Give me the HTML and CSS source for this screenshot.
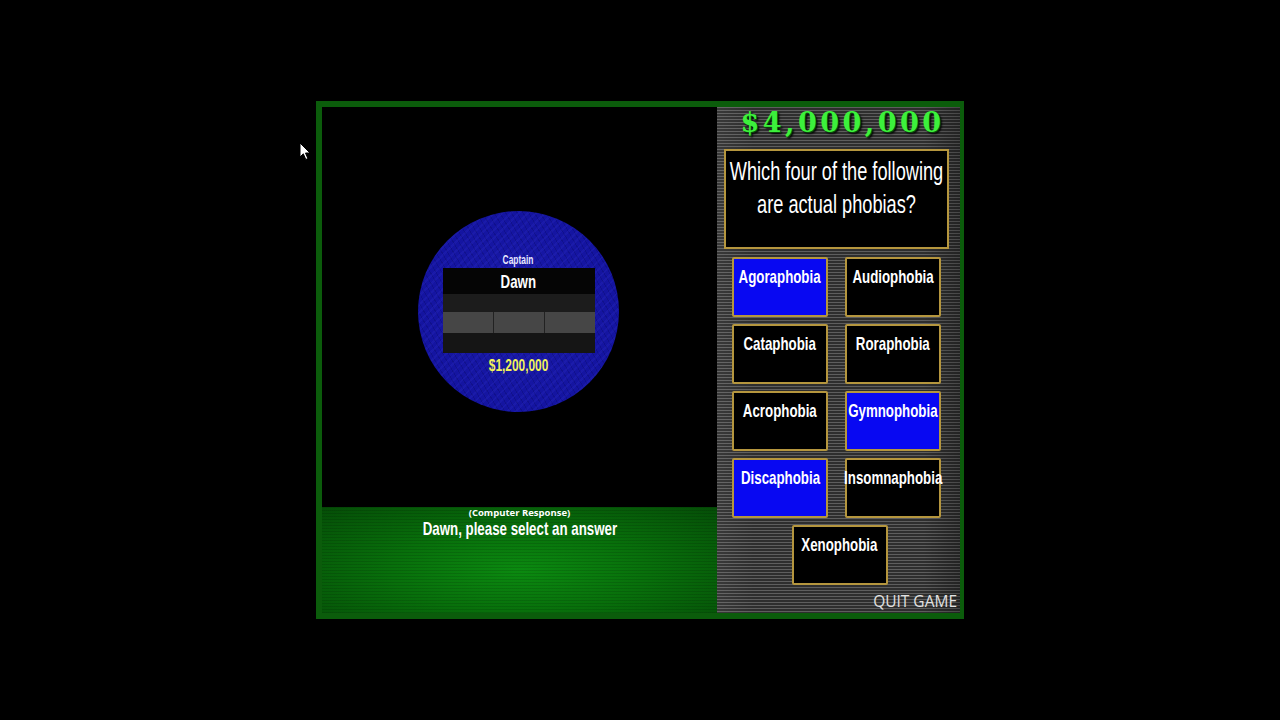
FILE: index.html
```html
<!DOCTYPE html>
<html lang="en">
<head>
    <meta charset="UTF-8">
    <meta name="viewport" content="width=device-width, initial-scale=1.0">
    <title>Phobia Round</title>
    <link rel="stylesheet" href="styles.css">
</head>
<body>
    <svg class="pointer" width="12" height="19" viewBox="0 0 12 19">
        <path d="M1 1 L1 15 L4.3 11.8 L6.8 17.5 L8.9 16.6 L6.5 11 L11 11 Z" fill="#fff" stroke="#000" stroke-width="1"/>
    </svg>
    <div class="frame">
        <div class="stage">
            <div class="arena">
                <div class="disc">
                    <div class="role"><span class="sq">Captain</span></div>
                    <div class="plate">
                        <div class="plate-name"><span class="sq">Dawn</span></div>
                        <div class="plate-blank"></div>
                        <div class="plate-cells"><span></span><span></span><span></span></div>
                        <div class="plate-blank low"></div>
                    </div>
                    <div class="bank"><span class="sq">$1,200,000</span></div>
                </div>
            </div>
            <div class="response">
                <div class="response-label">(Computer Response)</div>
                <div class="response-text"><span class="sq">Dawn, please select an answer</span></div>
            </div>
        </div>
        <div class="board">
            <div class="prize">$4,000,000</div>
            <div class="question"><span class="sq">Which four of the following<br>are actual phobias?</span></div>
            <div class="answers">
                <div class="answer picked"><span class="sq">Agoraphobia</span></div>
                <div class="answer"><span class="sq">Audiophobia</span></div>
                <div class="answer"><span class="sq">Cataphobia</span></div>
                <div class="answer"><span class="sq">Roraphobia</span></div>
                <div class="answer"><span class="sq">Acrophobia</span></div>
                <div class="answer picked"><span class="sq">Gymnophobia</span></div>
                <div class="answer picked"><span class="sq">Discaphobia</span></div>
                <div class="answer"><span class="sq">Insomnaphobia</span></div>
                <div class="answer last"><span class="sq">Xenophobia</span></div>
            </div>
            <div class="quit">QUIT GAME</div>
        </div>
    </div>
</body>
</html>
```

FILE: styles.css
```css
body {
    margin: 0;
    height: 100vh;
    background-color: #000;
    display: flex;
    align-items: center;
    justify-content: center;
    font-family: "Liberation Sans", Arial, sans-serif;
    color: #fff;
}
/* narrow display lettering: squeeze regular glyphs horizontally */
.sq {
    display: inline-block;
    transform: scaleX(0.7);
    white-space: nowrap;
}
.pointer {
    position: absolute;
    left: 299px;
    top: 142px;
}
.frame {
    display: flex;
    width: 638px;
    height: 506px;
    border: solid #0b5c0b;
    border-width: 6px 4px 6px 6px;
}
.stage {
    width: 395px;
    display: flex;
    flex-direction: column;
}
.arena {
    flex: 1;
    background-color: #000;
    display: flex;
    justify-content: center;
    padding-top: 104px;
    padding-right: 2px;
    box-sizing: border-box;
}
.disc {
    width: 201px;
    height: 201px;
    border-radius: 50%;
    background:
        repeating-linear-gradient(135deg, rgba(70, 70, 230, 0.12) 0 2px, transparent 2px 6px),
        repeating-linear-gradient(60deg, rgba(0, 0, 50, 0.18) 0 1px, transparent 1px 5px),
        radial-gradient(circle, #1a1aa8 0%, #1414a0 70%, #10108c 100%);
    display: flex;
    flex-direction: column;
    align-items: center;
    padding-top: 43px;
    box-sizing: border-box;
}
.role {
    font-size: 12px;
    font-weight: bold;
    line-height: 13px;
    color: #e8e8ff;
}
.plate {
    width: 152px;
    margin-top: 1px;
    background-color: #050505;
}
.plate-name {
    height: 26px;
    line-height: 28px;
    font-size: 19px;
    font-weight: bold;
    text-align: center;
}
.plate-blank {
    height: 18px;
    background-color: #1c1c1c;
}
.plate-blank.low {
    height: 20px;
    background-color: #151515;
}
.plate-cells {
    height: 21px;
    display: flex;
    gap: 1px;
    background-color: #222;
}
.plate-cells span {
    flex: 1;
    background-color: #464646;
}
.bank {
    margin-top: 4px;
    font-size: 17px;
    line-height: 18px;
    font-weight: bold;
    color: #f2f25a;
}
.response {
    height: 106px;
    background:
        repeating-linear-gradient(to bottom, rgba(0, 0, 0, 0.12) 0 1px, transparent 1px 3px),
        radial-gradient(ellipse at 50% 60%, #0b8a10 0%, #08700b 45%, #054d07 100%);
    text-align: center;
}
.response-label {
    font-family: "Open Sans", sans-serif;
    font-size: 9.5px;
    font-weight: bold;
    line-height: 11px;
}
.response-text {
    font-size: 19px;
    font-weight: bold;
    line-height: 22px;
}
.board {
    width: 243px;
    padding: 0 11px 0 7px;
    box-sizing: border-box;
    display: flex;
    flex-direction: column;
    background:
        linear-gradient(to right, rgba(255, 255, 255, 0.05), transparent 15%, transparent 85%, rgba(0, 0, 0, 0.25)),
        repeating-linear-gradient(to bottom, #5e5e5e 0 1px, #2e2e2e 1px 3px);
}
.prize {
    height: 30px;
    line-height: 31px;
    padding-left: 12px;
    text-align: center;
    font-family: "DejaVu Serif", serif;
    font-size: 27px;
    font-weight: bold;
    letter-spacing: 3.5px;
    color: #3cf03c;
    text-shadow: 1px 1px 0 #0a4a0a, 2px 2px 2px #000;
}
.question {
    height: 100px;
    margin-top: 12px;
    padding-top: 4px;
    box-sizing: border-box;
    border: 2px solid #b5963e;
    background-color: #000;
    display: flex;
    justify-content: center;
    align-items: flex-start;
    text-align: center;
    font-size: 26px;
    line-height: 33px;
}
.answers {
    margin-top: 8px;
    display: grid;
    grid-template-columns: 96px 96px;
    grid-auto-rows: 60px;
    column-gap: 17px;
    row-gap: 7px;
    justify-content: center;
}
.answer {
    display: flex;
    justify-content: center;
    align-items: flex-start;
    border: 2px solid #b5963e;
    border-radius: 2px;
    background-color: #000;
    box-sizing: border-box;
    padding-top: 7px;
    font-size: 19px;
    font-weight: bold;
    line-height: 22px;
}
.answer.picked {
    background-color: #0808f2;
}
.answer.last {
    grid-column: 1 / -1;
    justify-self: center;
    width: 96px;
    margin-left: 6px;
}
.quit {
    margin-top: auto;
    margin-right: -8px;
    padding-bottom: 2px;
    text-align: right;
    font-family: "Open Sans", sans-serif;
    font-size: 15.5px;
    line-height: 19px;
    color: #e2e2e2;
}
```
